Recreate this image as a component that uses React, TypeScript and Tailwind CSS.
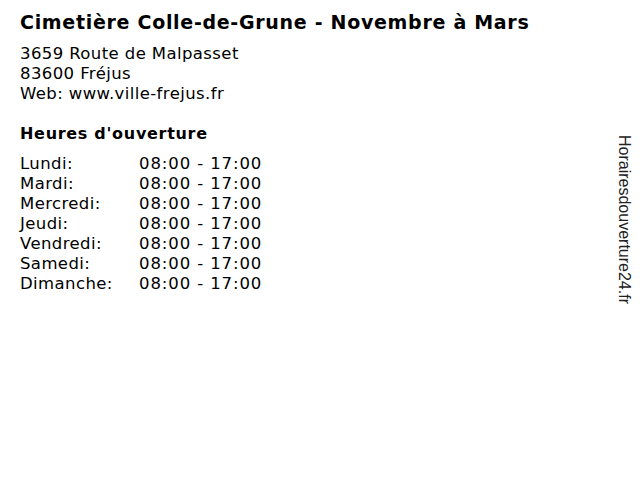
const hours = [
    ["Lundi:", "08:00 - 17:00"],
    ["Mardi:", "08:00 - 17:00"],
    ["Mercredi:", "08:00 - 17:00"],
    ["Jeudi:", "08:00 - 17:00"],
    ["Vendredi:", "08:00 - 17:00"],
    ["Samedi:", "08:00 - 17:00"],
    ["Dimanche:", "08:00 - 17:00"],
];

const App = () => {
    return (
        <div className="w-[640px] h-[480px] bg-white flex text-black">
            <div className="flex-1 flex flex-col pl-5 pt-[10px] font-['DejaVu_Sans',sans-serif]">
                <p className="text-[19px] font-bold leading-[24px] tracking-[0.7px]">Cimetière Colle-de-Grune - Novembre à Mars</p>
                <div className="flex flex-col mt-[10px] text-[16.5px] leading-[20px] tracking-[0.4px]">
                    <p>3659 Route de Malpasset</p>
                    <p>83600 Fréjus</p>
                    <p>Web: www.ville-frejus.fr</p>
                </div>
                <p className="mt-[20px] text-[16px] font-bold leading-[20px] tracking-[0.7px]">Heures d'ouverture</p>
                <div className="flex flex-col mt-[10px] text-[16.5px] leading-[20px]">
                    {hours.map(([day, time]) => (
                        <div key={day} className="flex">
                            <span className="w-[119px] tracking-[0.4px]">{day}</span>
                            <span className="tracking-[0.9px]">{time}</span>
                        </div>
                    ))}
                </div>
            </div>
            <div className="w-[40px] flex flex-col pt-[135px] pr-[6px]">
                <p className="[writing-mode:vertical-rl] text-[16px] leading-[20px] font-['Liberation_Sans',sans-serif] text-[#222]">
                    Horairesdouverture24.fr
                </p>
            </div>
        </div>
    );
};

export default App;
